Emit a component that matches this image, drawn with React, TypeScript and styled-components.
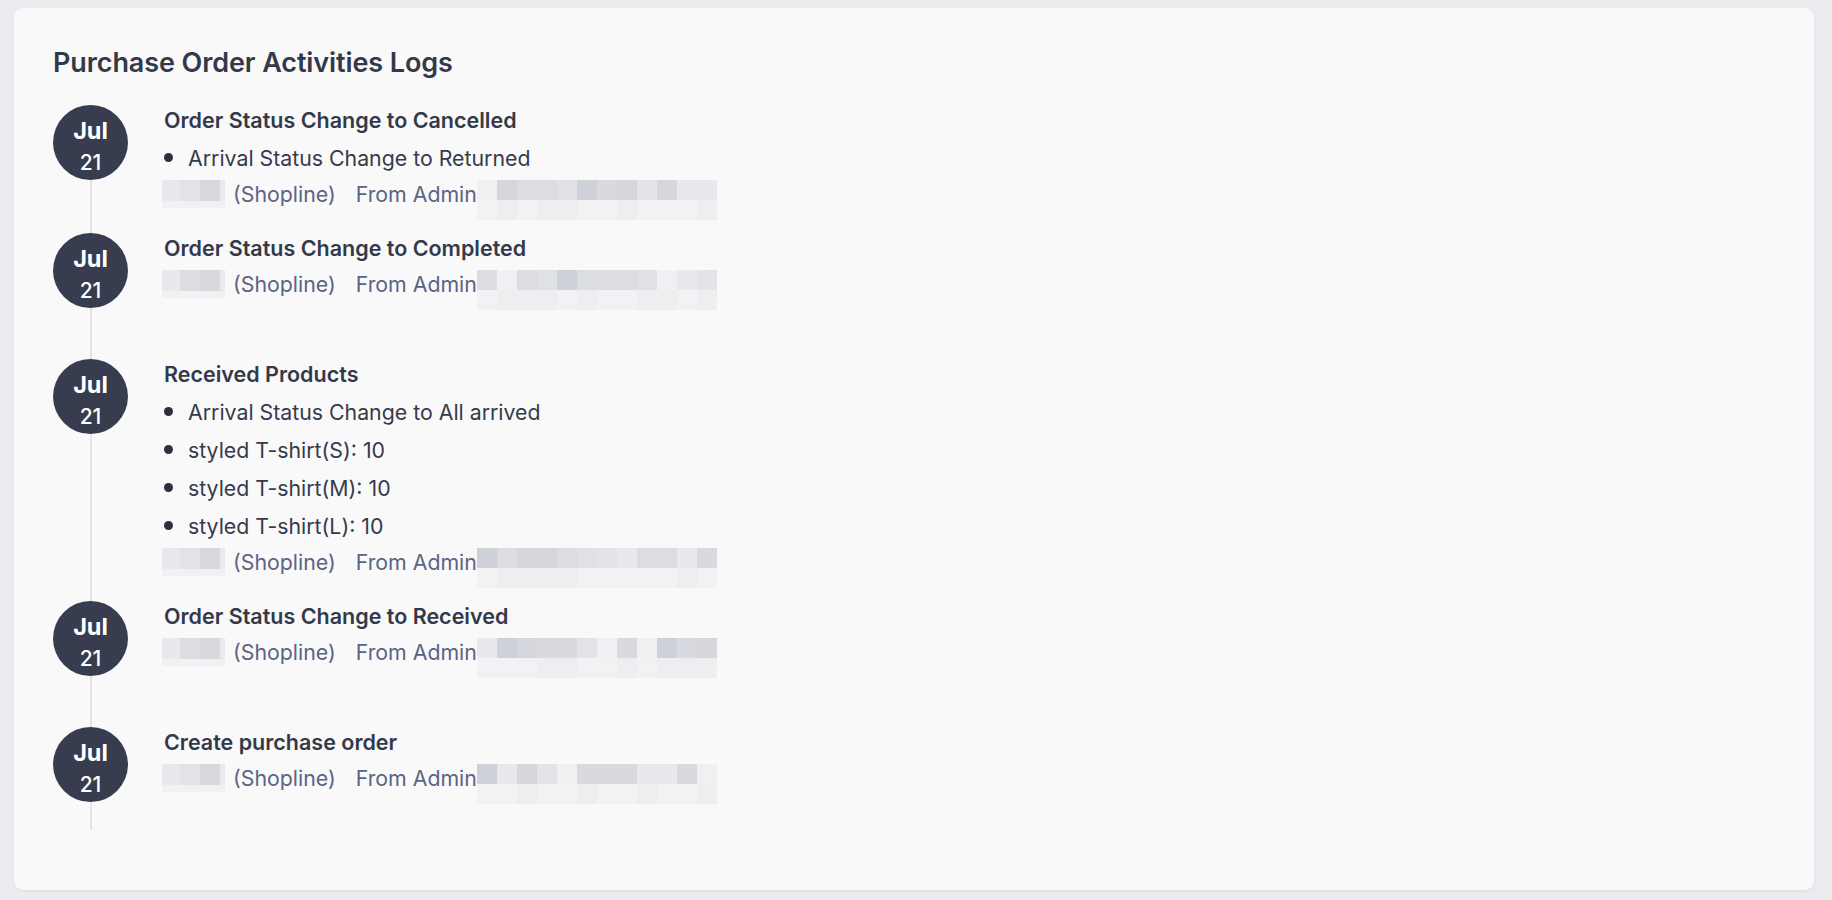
import React from "react";
import styled, { createGlobalStyle } from "styled-components";

const Global = createGlobalStyle`
  html, body { margin: 0; padding: 0; background: #ebecef; }
  body { font-family: Inter, "Noto Sans", "Liberation Sans", sans-serif; -webkit-font-smoothing: antialiased; }
  * { box-sizing: border-box; }
`;

const Page = styled.div`
  padding: 8px 18px 10px 14px;
  min-height: 900px;
`;

const Card = styled.section`
  background: #f9f9fa;
  border-radius: 9px;
  box-shadow: 0 1px 3px rgba(30, 35, 60, 0.08);
  padding: 39px 39px 60px 39px;
  min-height: 882px;
`;

const Heading = styled.h1`
  margin: 0 0 26px 0;
  font-size: 27px;
  line-height: 32px;
  font-weight: 600;
  color: #343949;
  letter-spacing: -0.1px;
`;

const Timeline = styled.div`
  display: flex;
  flex-direction: column;
`;

const Item = styled.div`
  display: flex;
  min-height: 126px;
  &:last-child { min-height: 103px; }
`;

const Rail = styled.div`
  width: 75px;
  flex: none;
  display: flex;
  flex-direction: column;
  align-items: center;
`;

const Circle = styled.div`
  width: 75px;
  height: 75px;
  border-radius: 50%;
  background: #373c4e;
  color: #ffffff;
  display: flex;
  flex-direction: column;
  align-items: center;
  justify-content: center;
  flex: none;
`;

const Month = styled.span`
  font-size: 23.5px;
  line-height: 28px;
  font-weight: 700;
  margin-top: 6.5px;
`;

const Day = styled.span`
  font-size: 21px;
  line-height: 24px;
  font-weight: 500;
  margin-top: 5.5px;
`;

const Line = styled.div`
  flex: 1;
  width: 2px;
  background: #e3e5ea;
`;

const Content = styled.div`
  margin-left: 36px;
  padding-bottom: 25px;
  display: flex;
  flex-direction: column;
  gap: 7px;
`;

const Title = styled.div`
  font-size: 21.5px;
  line-height: 30px;
  font-weight: 600;
  color: #343949;
`;

const Bullet = styled.div`
  display: flex;
  align-items: center;
  height: 31px;
  font-size: 21.3px;
  color: #363b4b;
  &::before {
    content: "";
    width: 9px;
    height: 9px;
    border-radius: 50%;
    background: #2c303c;
    margin-right: 15px;
    flex: none;
  }
`;

const Meta = styled.div`
  display: flex;
  align-items: center;
  height: 28px;
  font-size: 21.3px;
  color: #5b6483;
  margin-left: -2px;
`;

const Source = styled.span`
  margin-left: 8px;
  margin-right: 20px;
`;

const Blur = styled.svg`
  flex: none;
  display: block;
`;

const palette = ["#e9e9ed", "#dcdde2", "#d6d7dd", "#e4e4e8", "#cfd1d9", "#f0f0f3", "#e0e1e6", "#d9dadf"];

function Mosaic({ cols, seed, width }: { cols: number; seed: number; width: number }) {
  const cells: React.ReactNode[] = [];
  let s = seed;
  const rnd = () => {
    s = (s * 9301 + 49297) % 233280;
    return s / 233280;
  };
  for (let c = 0; c < cols; c++) {
    const top = palette[Math.floor(rnd() * palette.length)];
    cells.push(<rect key={"t" + c} x={c * 20} y={0} width={20} height={20} fill={top} />);
    const low = rnd() > 0.5 ? "#f2f2f4" : "#eeeef1";
    cells.push(<rect key={"b" + c} x={c * 20} y={20} width={20} height={20} fill={low} />);
  }
  return (
    <Blur width={width} height={40} viewBox={`0 0 ${width} 40`} style={{ marginTop: 12 }}>
      {cells}
    </Blur>
  );
}

function Name({ seed }: { seed: number }) {
  return (
    <Blur width={63} height={28} viewBox="0 0 63 28">
      <rect x={0} y={0} width={18} height={21} fill="#e9e9ed" />
      <rect x={18} y={0} width={20} height={21} fill={seed % 2 ? "#dcdde2" : "#e2e2e7"} />
      <rect x={38} y={0} width={20} height={21} fill="#d8d9de" />
      <rect x={58} y={0} width={5} height={21} fill="#eaeaee" />
      <rect x={0} y={21} width={63} height={7} fill="#f1f1f3" />
    </Blur>
  );
}

type Entry = { title: string; bullets: string[] };

const entries: Entry[] = [
  { title: "Order Status Change to Cancelled", bullets: ["Arrival Status Change to Returned"] },
  { title: "Order Status Change to Completed", bullets: [] },
  {
    title: "Received Products",
    bullets: [
      "Arrival Status Change to All arrived",
      "styled T-shirt(S): 10",
      "styled T-shirt(M): 10",
      "styled T-shirt(L): 10",
    ],
  },
  { title: "Order Status Change to Received", bullets: [] },
  { title: "Create purchase order", bullets: [] },
];

export default function App() {
  return (
    <>
      <Global />
      <Page>
        <Card>
          <Heading>Purchase Order Activities Logs</Heading>
          <Timeline>
            {entries.map((e, i) => (
              <Item key={i}>
                <Rail>
                  <Circle>
                    <Month>Jul</Month>
                    <Day>21</Day>
                  </Circle>
                  <Line />
                </Rail>
                <Content>
                  <Title>{e.title}</Title>
                  {e.bullets.map((b) => (
                    <Bullet key={b}>{b}</Bullet>
                  ))}
                  <Meta>
                    <Name seed={i} />
                    <Source>(Shopline)</Source>
                    <span>From Admin</span>
                    <Mosaic cols={12} seed={i * 37 + 11} width={240} />
                  </Meta>
                </Content>
              </Item>
            ))}
          </Timeline>
        </Card>
      </Page>
    </>
  );
}
